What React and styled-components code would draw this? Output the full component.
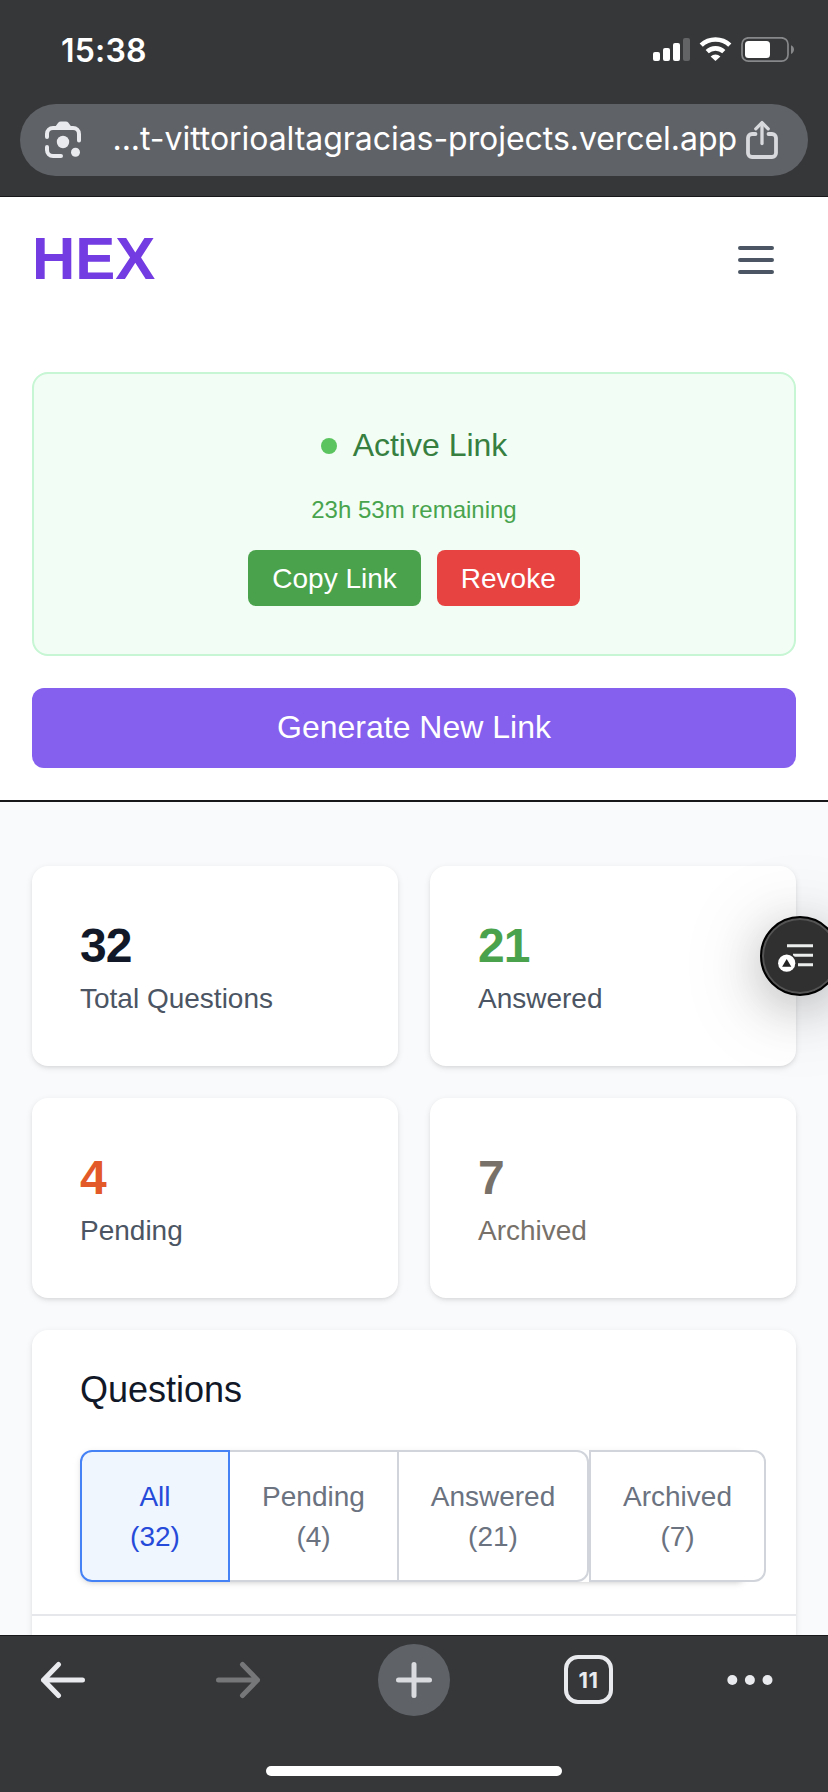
import React, { useState } from "react";
import styled, { createGlobalStyle } from "styled-components";

const GlobalStyle = createGlobalStyle`
  * {
    box-sizing: border-box;
  }
  body {
    margin: 0;
    font-family: "Liberation Sans", Arial, sans-serif;
    background: #f9fafc;
  }
  button {
    font-family: inherit;
    margin: 0;
    cursor: pointer;
  }
  svg {
    display: block;
    flex-shrink: 0;
  }
`;

const Screen = styled.div`
  width: 828px;
  height: 1792px;
  display: flex;
  flex-direction: column;
  position: relative;
  overflow: hidden;
`;

const TopChrome = styled.div`
  height: 197px;
  flex-shrink: 0;
  background: #363739;
  border-bottom: 1px solid #18181b;
  font-family: Inter, sans-serif;
  color: white;
`;

const StatusBar = styled.div`
  height: 104px;
  display: flex;
  align-items: center;
  justify-content: space-between;
  padding: 0 34px 4px 61px;
`;

const Clock = styled.span`
  font-size: 32px;
  font-weight: 600;
  letter-spacing: 0.2px;
`;

const AddressBar = styled.div`
  height: 72px;
  margin: 0 20px;
  padding: 0 28px 0 22px;
  display: flex;
  align-items: center;
  border-radius: 36px;
  background: #5f6267;
`;

const Url = styled.span`
  margin: 0 7px 0 auto;
  font-size: 32px;
  line-height: 40px;
  letter-spacing: -0.05px;
  white-space: nowrap;
  padding-bottom: 3px;
`;

const Page = styled.div`
  flex: 1;
  min-height: 0;
  overflow: hidden;
`;

const Header = styled.header`
  height: 605px;
  padding: 23px 32px 32px;
  background: white;
  border-bottom: 2px solid #18181b;
`;

const HeaderRow = styled.div`
  height: 80px;
  display: flex;
  align-items: center;
  justify-content: space-between;
  padding-right: 16px;
  margin-bottom: 72px;
`;

const Logo = styled.h1`
  margin: 0;
  padding-bottom: 2px;
  font-size: 60px;
  line-height: 72px;
  font-weight: bold;
  color: #733be2;
`;

const MenuButton = styled.button`
  padding: 0;
  border: none;
  background: none;
  color: #4b5563;
`;

const LinkCard = styled.section`
  height: 284px;
  padding: 48px;
  display: flex;
  flex-direction: column;
  align-items: center;
  gap: 24px;
  border: 2px solid #c6f6d3;
  border-radius: 16px;
  background: #f2fdf5;
`;

const LinkTitle = styled.div`
  height: 48px;
  display: flex;
  align-items: center;
  gap: 16px;
  font-size: 32px;
  line-height: 48px;
  color: #367f40;
`;

const LinkName = styled.span`
  padding-bottom: 2px;
`;

const Dot = styled.span`
  width: 16px;
  height: 16px;
  border-radius: 50%;
  background: #5bc45f;
`;

const Remaining = styled.p`
  margin: 0;
  font-size: 24px;
  line-height: 32px;
  color: #48a44d;
`;

const Actions = styled.div`
  display: flex;
  gap: 16px;
`;

const ActionButton = styled.button`
  height: 56px;
  padding: 9px 24px 7px;
  border: none;
  border-radius: 8px;
  font-size: 28px;
  line-height: 40px;
  color: white;
  background: ${(props) => (props.$danger ? "#e74341" : "#4aa34c")};
`;

const GenerateButton = styled.button`
  width: 100%;
  height: 80px;
  margin-top: 32px;
  padding: 0 0 2px;
  border: none;
  border-radius: 12px;
  font-size: 32px;
  line-height: 48px;
  color: white;
  background: #855fed;
`;

const Main = styled.main`
  padding: 64px 32px 0;
`;

const Stats = styled.div`
  display: grid;
  grid-template-columns: 1fr 1fr;
  gap: 32px;
  margin-bottom: 32px;
`;

const Card = styled.div`
  border-radius: 16px;
  background: white;
  box-shadow: 0 2px 6px rgba(0, 0, 0, 0.1), 0 2px 4px -2px rgba(0, 0, 0, 0.1);
`;

const StatCard = styled(Card)`
  height: 200px;
  padding: 48px;
`;

const StatNumber = styled.div`
  font-size: 48px;
  line-height: 64px;
  font-weight: bold;
  letter-spacing: -1px;
  color: ${(props) => props.$color};
`;

const StatLabel = styled.div`
  padding-top: 1px;
  font-size: 28px;
  line-height: 40px;
  color: ${(props) => props.$color || "#4b5563"};
`;

const QuestionsCard = styled(Card)`
  height: 500px;
`;

const QuestionsHead = styled.div`
  padding: 32px 48px;
  border-bottom: 2px solid #e5e7eb;
`;

const Title = styled.h2`
  margin: 0 0 32px;
  font-size: 36px;
  line-height: 56px;
  font-weight: normal;
  color: #111827;
`;

const Filters = styled.div`
  display: flex;
  border-radius: 12px;
  box-shadow: 0 2px 6px rgba(0, 0, 0, 0.1), 0 2px 4px -2px rgba(0, 0, 0, 0.1);
`;

const Filter = styled.button`
  width: ${(props) => props.$width}px;
  height: 132px;
  flex-shrink: 0;
  padding: 25px 0 23px;
  margin-left: ${(props) => (props.$joined ? "-2px" : "0")};
  border: 2px solid ${(props) => (props.$active ? "#4582f5" : "#d1d5db")};
  border-radius: ${(props) => props.$radius};
  background: ${(props) => (props.$active ? "#eff6fe" : "white")};
  color: ${(props) => (props.$active ? "#264ad9" : "#6b7280")};
  /* the selected one keeps its border over the neighbour */
  z-index: ${(props) => (props.$active ? 1 : 0)};
  font-size: 28px;
  line-height: 40px;
  text-align: center;
`;

const FilterLine = styled.span`
  display: block;
`;

const FloatingButton = styled.button`
  position: absolute;
  top: 916px;
  right: -12px;
  width: 80px;
  height: 80px;
  padding: 4px 0 0 15px;
  border: 2px solid #000;
  border-radius: 50%;
  background: #303030;
  box-shadow: inset 0 0 0 2px #545454, 0 12px 48px rgba(0, 0, 0, 0.2),
    0 10px 90px rgba(0, 0, 0, 0.16);
`;

const BottomChrome = styled.nav`
  height: 157px;
  flex-shrink: 0;
  display: flex;
  flex-direction: column;
  align-items: center;
  padding-top: 8px;
  border-top: 1px solid #18181b;
  background: #363739;
  font-family: Inter, sans-serif;
`;

const ToolRow = styled.div`
  width: 100%;
  display: grid;
  grid-template-columns: 126px 224px 128px 221px 101px;
  align-items: center;
  justify-items: center;
  height: 72px;
  margin-bottom: 50px;
`;

const NewTab = styled.div`
  width: 72px;
  height: 72px;
  display: flex;
  align-items: center;
  justify-content: center;
  border-radius: 50%;
  background: #5f6368;
`;

const TabCount = styled.div`
  width: 49px;
  height: 49px;
  display: flex;
  align-items: center;
  justify-content: center;
  margin-bottom: 1px;
  border: 4.5px solid #e8eaed;
  border-radius: 14px;
  font-size: 22px;
  line-height: 22px;
  font-weight: 700;
  letter-spacing: 0.5px;
  padding-top: 1px;
  color: #e8eaed;
`;

const HomeIndicator = styled.div`
  width: 296px;
  height: 10px;
  border-radius: 5px;
  background: white;
`;

const stats = [
  { value: 32, label: "Total Questions", color: "#111827" },
  { value: 21, label: "Answered", color: "#4aa34c" },
  { value: 4, label: "Pending", color: "#e35a28" },
  { value: 7, label: "Archived", color: "#77716a", labelColor: "#77716a" },
];

const filters = [
  { name: "All", count: 32, width: 150, radius: "12px 0 0 12px" },
  { name: "Pending", count: 4, width: 171, radius: "0", joined: true },
  { name: "Answered", count: 21, width: 192, radius: "0 12px 12px 0", joined: true },
  { name: "Archived", count: 7, width: 177, radius: "0 12px 12px 0" },
];

const StatusIcons = () => (
  <svg width="142" height="26" viewBox="652 37 142 26" fill="white">
    <rect x="653" y="52" width="7" height="9" rx="2" />
    <rect x="663" y="48" width="7" height="13" rx="2" />
    <rect x="673" y="43" width="7" height="18" rx="2" />
    <rect x="683" y="38" width="7" height="23" rx="2" fill="#636466" />
    <g fill="none" stroke="white" strokeWidth="4.6">
      <path d="M701.2 45.2a20.7 20.7 0 0 1 28.6 0" />
      <path d="M707.2 51.6a12.2 12.2 0 0 1 16.6 0" />
    </g>
    <path d="M715.5 61l-4.9-4.6a7.2 7.2 0 0 1 9.8 0z" />
    <rect x="742" y="37.8" width="46" height="23.4" rx="6.5" fill="none" stroke="#87888a" strokeWidth="1.7" />
    <rect x="745" y="41" width="25" height="17" rx="3.5" />
    <path d="M791 45.2c4 1.6 4 7.2 0 8.8z" fill="#87888a" />
  </svg>
);

const LensIcon = () => (
  <svg width="42" height="42" viewBox="42 119 42 42" fill="none" stroke="#e8eaed" strokeWidth="4" strokeLinecap="round">
    <path d="M47 137v-3a6 6 0 0 1 6-6h20a6 6 0 0 1 6 6v6.5" />
    <path d="M47 147v3a6 6 0 0 0 6 6h8" />
    <path d="M55 127l3.2-4.2q1-1.3 2.6-1.3h5q1.6 0 2.6 1.3l3.2 4.2z" fill="#e8eaed" stroke="none" />
    <circle cx="63" cy="142" r="6.2" fill="#e8eaed" stroke="none" />
    <circle cx="75.5" cy="152.3" r="4.5" fill="#e8eaed" stroke="none" />
  </svg>
);

const ShareIcon = () => (
  <svg width="36" height="42" viewBox="744 120 36 42" fill="none" stroke="#d7d9dc" strokeWidth="3.8" strokeLinecap="round" strokeLinejoin="round">
    <path d="M755.5 135h-3.500a4 4 0 0 0-4 4v15a4 4 0 0 0 4 4h20a4 4 0 0 0 4-4v-15a4 4 0 0 0-4-4h-3.500" />
    <path d="M762 144.5v-20" strokeWidth="3.3" />
    <path d="M755.8 129.8l6.2-6.2 6.2 6.2" strokeWidth="3.3" />
  </svg>
);

const MenuIcon = () => (
  <svg width="48" height="48" viewBox="0 0 24 24" fill="none" stroke="currentColor" strokeWidth="2" strokeLinecap="round">
    <path d="M4 6h16M4 12h16M4 18h16" />
  </svg>
);

const Arrow = ({ forward }) => (
  <svg width="46" height="38" viewBox="0 0 46 38" fill="none" stroke={forward ? "#767779" : "#e8eaed"} strokeWidth="5" strokeLinecap="round" strokeLinejoin="round">
    <path d={forward ? "M3.5 19h39M27.5 3.5L42.5 19l-15 15.5" : "M42.5 19h-39M18.5 3.5L3.5 19l15 15.5"} />
  </svg>
);

const AssistIcon = () => (
  <svg width="36" height="30" viewBox="777 943 36 30">
    <path d="M787 945.8h26M793 955.3h20M798 964.8h15" stroke="#eceeed" strokeWidth="2.9" />
    <circle cx="786.7" cy="963.2" r="10.3" fill="#303030" />
    <circle cx="786.7" cy="963.2" r="8.6" fill="white" />
    <path d="M786.7 959l4.6 7.8h-9.200z" fill="#222" />
  </svg>
);

export default function App() {
  const [selected, setSelected] = useState("All");

  return (
    <>
      <GlobalStyle />
      <Screen>
        <TopChrome>
          <StatusBar>
            <Clock>15:38</Clock>
            <StatusIcons />
          </StatusBar>
          <AddressBar>
            <LensIcon />
            <Url>...t-vittorioaltagracias-projects.vercel.app</Url>
            <ShareIcon />
          </AddressBar>
        </TopChrome>

        <Page>
          <Header>
            <HeaderRow>
              <Logo>HEX</Logo>
              <MenuButton aria-label="Menu">
                <MenuIcon />
              </MenuButton>
            </HeaderRow>
            <LinkCard>
              <LinkTitle>
                <Dot />
                <LinkName>Active Link</LinkName>
              </LinkTitle>
              <Remaining>23h 53m remaining</Remaining>
              <Actions>
                <ActionButton>Copy Link</ActionButton>
                <ActionButton $danger>Revoke</ActionButton>
              </Actions>
            </LinkCard>
            <GenerateButton>Generate New Link</GenerateButton>
          </Header>

          <Main>
            <Stats>
              {stats.map((s) => (
                <StatCard key={s.label}>
                  <StatNumber $color={s.color}>{s.value}</StatNumber>
                  <StatLabel $color={s.labelColor}>{s.label}</StatLabel>
                </StatCard>
              ))}
            </Stats>
            <QuestionsCard>
              <QuestionsHead>
                <Title>Questions</Title>
                <Filters>
                  {filters.map((f) => (
                    <Filter
                      key={f.name}
                      $width={f.width}
                      $radius={f.radius}
                      $joined={f.joined}
                      $active={selected === f.name}
                      onClick={() => setSelected(f.name)}
                    >
                      <FilterLine>{f.name}</FilterLine>
                      <FilterLine>({f.count})</FilterLine>
                    </Filter>
                  ))}
                </Filters>
              </QuestionsHead>
            </QuestionsCard>
          </Main>
        </Page>

        <BottomChrome>
          <ToolRow>
            <Arrow />
            <Arrow forward />
            <NewTab>
              <svg width="36" height="36" viewBox="0 0 36 36" stroke="#d9dbde" strokeWidth="5" strokeLinecap="round">
                <path d="M18 2.5v31M2.5 18h31" />
              </svg>
            </NewTab>
            <TabCount>11</TabCount>
            <svg width="46" height="12" viewBox="0 0 46 12" fill="#e8eaed">
              <circle cx="5.3" cy="6" r="5" />
              <circle cx="22.9" cy="6" r="5" />
              <circle cx="40.5" cy="6" r="5" />
            </svg>
          </ToolRow>
          <HomeIndicator />
        </BottomChrome>

        <FloatingButton aria-label="Open list">
          <AssistIcon />
        </FloatingButton>
      </Screen>
    </>
  );
}
